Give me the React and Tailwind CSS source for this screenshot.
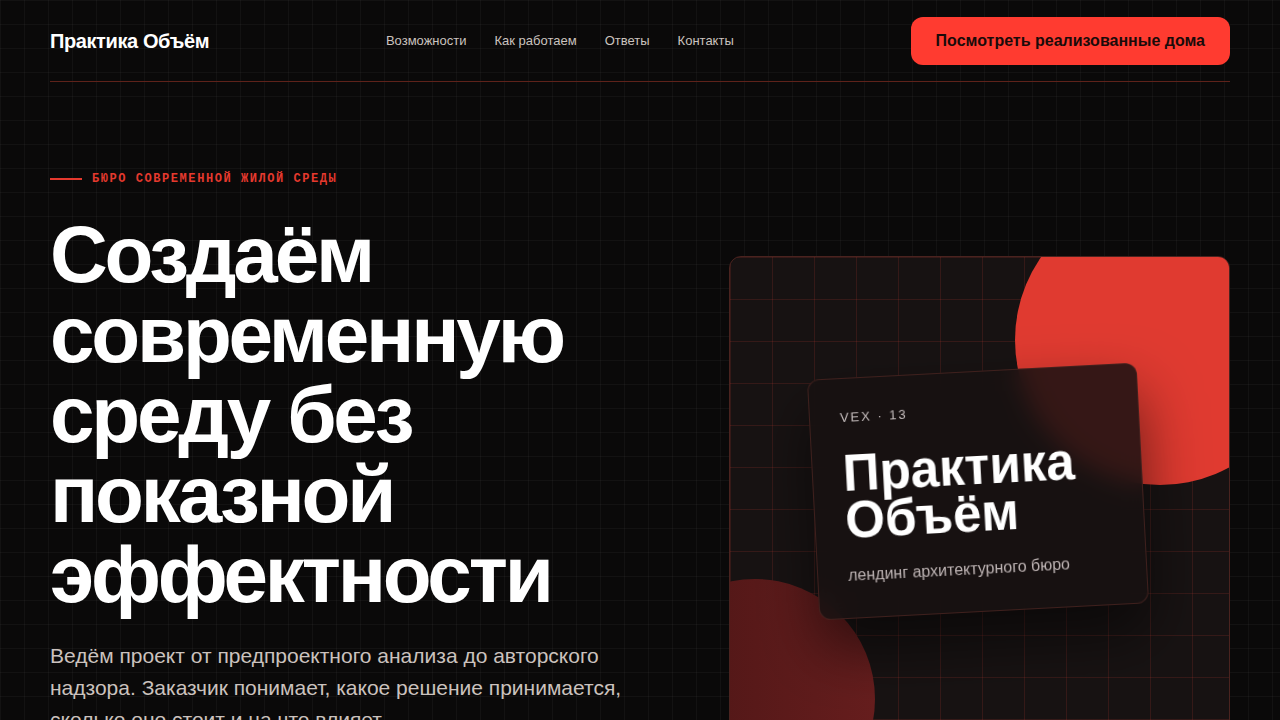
import React from 'react';

const navLinks = ['Возможности', 'Как работаем', 'Ответы', 'Контакты'];

const App = () => {
  return (
    <div className="min-h-screen overflow-hidden bg-[#0a0909] bg-[linear-gradient(to_right,rgba(255,255,255,0.035)_1px,transparent_1px),linear-gradient(to_bottom,rgba(255,255,255,0.035)_1px,transparent_1px)] bg-[size:24px_24px] font-['Liberation_Sans',Arial,sans-serif] text-white">
      <div className="mx-auto max-w-[1180px]">
        {/* header */}
        <header className="flex items-center justify-between border-b border-[#5e221a] pt-[17px] pb-[16px]">
          <a href="#" className="text-[20px] font-bold tracking-[-0.02em] text-white">
            Практика Объём
          </a>
          <nav className="flex gap-7 text-[13px] text-[#cbc3bf]">
            {navLinks.map((link) => (
              <a key={link} href="#">{link}</a>
            ))}
          </nav>
          <button className="h-12 rounded-xl bg-[#ff3b30] px-[25px] text-[16px] font-bold text-[#1a0b0a]">
            Посмотреть реализованные дома
          </button>
        </header>

        {/* hero */}
        <section className="flex justify-between pt-[90px]">
          <div className="w-[600px]">
            <div className="flex items-center gap-[10px]">
              <span className="h-[2px] w-8 bg-[#e5392e]" />
              <span className="font-['Liberation_Mono',monospace] text-[12px] leading-[14px] font-bold tracking-[0.13em] text-[#e5392e]">
                БЮРО СОВРЕМЕННОЙ ЖИЛОЙ СРЕДЫ
              </span>
            </div>
            <h1 className="mt-[29px] text-[80px] leading-[80px] font-bold tracking-[-0.04em]">
              Создаём современную среду без показной эффектности
            </h1>
            <p className="mt-[25px] max-w-[600px] text-[21px] leading-8 text-[#cbc2be]">
              Ведём проект от предпроектного анализа до авторского надзора. Заказчик понимает, какое решение
              принимается, сколько оно стоит и на что влияет.
            </p>
          </div>

          <div className="relative mt-[84px] h-[500px] w-[501px] shrink-0 overflow-hidden rounded-xl border border-[#4a231f] bg-[#171212] bg-[linear-gradient(to_right,rgba(255,70,60,0.13)_1px,transparent_1px),linear-gradient(to_bottom,rgba(255,70,60,0.13)_1px,transparent_1px)] bg-[size:42px_42px]">
            <div className="absolute top-[-62px] left-[285px] h-[290px] w-[290px] rounded-full bg-[#e03a30]" />
            <div className="absolute top-[322px] left-[-95px] h-[240px] w-[240px] rounded-full bg-[linear-gradient(to_right,#4a1515,#661d1d)]" />

            <div className="absolute top-[114px] left-[83px] w-[330px] -rotate-3 rounded-xl border border-[#4a2420]/80 bg-[#161111]/85 p-[30px] shadow-[0_30px_60px_rgba(0,0,0,0.55)] backdrop-blur-md">
              <div className="text-[13px] leading-[18px] tracking-[0.15em] text-[#c4bcbc]">VEX · 13</div>
              <div className="mt-[23px] text-[51px] leading-[47px] font-bold text-white">
                Практика
                <br />
                Объём
              </div>
              <div className="mt-[20px] text-[16px] leading-6 text-[#bdb3b3]">лендинг архитектурного бюро</div>
            </div>
          </div>
        </section>
      </div>
    </div>
  );
};

export default App;
